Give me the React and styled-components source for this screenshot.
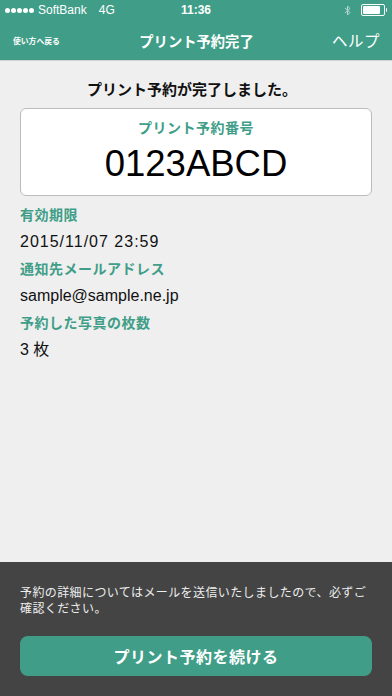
import React from 'react';
import styled, { createGlobalStyle } from 'styled-components';

const GREEN = '#409e88';

const Global = createGlobalStyle`
  html, body { margin: 0; padding: 0; }
  body {
    font-family: "Noto Sans CJK JP", "Liberation Sans", sans-serif;
    background: #efefef;
  }
  #root { height: 696px; }
`;

const Screen = styled.div`
  width: 392px;
  height: 696px;
  display: flex;
  flex-direction: column;
  background: #efefef;
  overflow: hidden;
`;

const Top = styled.div`
  background: ${GREEN};
  color: #fff;
  border-bottom: 1px solid #d2d2d2;
`;

const StatusBar = styled.div`
  height: 20px;
  display: flex;
  align-items: center;
  padding: 0 5px 0 5px;
  font-family: "Liberation Sans", "Noto Sans CJK JP", sans-serif;
  font-size: 12px;
  position: relative;
`;

const Carrier = styled.div`
  display: flex;
  align-items: center;
  gap: 4px;
  flex: 1;
`;

const Dots = styled.span`
  display: flex;
  gap: 1px;
  span {
    width: 5px;
    height: 5px;
    border-radius: 50%;
    background: #fff;
  }
`;

const Clock = styled.div`
  position: absolute;
  left: 0;
  right: 0;
  text-align: center;
  font-weight: 600;
  pointer-events: none;
`;

const Battery = styled.div`
  display: flex;
  align-items: center;
  gap: 1px;
  margin-left: 10px;
  span:first-child {
    width: 20px;
    height: 8px;
    border: 1px solid #fff;
    border-radius: 2px;
    padding: 1px;
    box-sizing: content-box;
  }
  span:first-child::after {
    content: '';
    display: block;
    width: 17px;
    height: 8px;
    background: #fff;
    border-radius: 1px;
  }
  span:last-child {
    width: 1.5px;
    height: 4px;
    background: #fff;
    border-radius: 0 1px 1px 0;
  }
`;

const NavBar = styled.div`
  height: 40px;
  display: grid;
  grid-template-columns: 1fr auto 1fr;
  align-items: center;
  padding: 0 12px 0 13px;
`;

const Back = styled.div`
  font-size: 7.8px;
  font-weight: bold;
`;

const Title = styled.div`
  font-size: 14.3px;
  font-weight: bold;
`;

const Help = styled.div`
  justify-self: end;
  font-size: 15.5px;
  letter-spacing: 0.5px;
`;

const Body = styled.div`
  flex: 1;
  padding: 15px 20px 0;
`;

const Heading = styled.div`
  text-align: center;
  font-size: 15px;
  font-weight: bold;
  color: #111;
  line-height: 26px;
  padding-right: 8px;
`;

const Card = styled.div`
  margin-top: 6px;
  height: 86px;
  background: #fff;
  border: 1px solid #bcbcbc;
  border-radius: 6px;
  display: flex;
  flex-direction: column;
  align-items: center;
`;

const CardLabel = styled.div`
  margin-top: 8px;
  font-size: 14px;
  font-weight: bold;
  color: ${GREEN};
  letter-spacing: 0.5px;
`;

const Code = styled.div`
  font-family: "Liberation Sans", Arial, sans-serif;
  font-size: 36.5px;
  color: #000;
  line-height: 40px;
  margin-top: 7px;
`;

const List = styled.div`
  margin-top: 5px;
`;

const Label = styled.div`
  height: 27px;
  line-height: 27px;
  font-size: 14px;
  font-weight: bold;
  color: ${GREEN};
  letter-spacing: 0.5px;
`;

const Value = styled.div`
  height: 27px;
  line-height: 27px;
  font-family: "Liberation Sans", "Noto Sans CJK JP", sans-serif;
  font-size: 16px;
  letter-spacing: ${(p) => (p.$wide ? '1px' : '0')};
  color: #111;
`;

const Footer = styled.div`
  background: #444;
  height: 134px;
  padding: 22px 20px 0;
  box-sizing: border-box;
`;

const Note = styled.div`
  font-size: 12px;
  color: #eee;
  line-height: 16px;
  letter-spacing: 0.4px;
`;

const Button = styled.button`
  margin-top: 20px;
  width: 100%;
  height: 40px;
  border: none;
  border-radius: 8px;
  background: ${GREEN};
  color: #fff;
  font-family: inherit;
  font-size: 16px;
  font-weight: bold;
  letter-spacing: 0.5px;
`;

const Bluetooth = () => (
  <svg width="7" height="11" viewBox="0 0 7 11" fill="none" stroke="#fff" strokeWidth="1" opacity="0.6">
    <path d="M1 3l5 4.5L3.5 10V1L6 3.5 1 8" />
  </svg>
);

const rows = [
  ['有効期限', '2015/11/07 23:59', true],
  ['通知先メールアドレス', 'sample@sample.ne.jp', false],
  ['予約した写真の枚数', '3 枚', false],
];

export default function App() {
  return (
    <Screen>
      <Global />
      <Top>
        <StatusBar>
          <Carrier>
            <Dots>
              <span /><span /><span /><span /><span />
            </Dots>
            <span>SoftBank</span>
            <span style={{ marginLeft: 8 }}>4G</span>
          </Carrier>
          <Clock>11:36</Clock>
          <Bluetooth />
          <Battery>
            <span />
            <span />
          </Battery>
        </StatusBar>
        <NavBar>
          <Back>使い方へ戻る</Back>
          <Title>プリント予約完了</Title>
          <Help>ヘルプ</Help>
        </NavBar>
      </Top>
      <Body>
        <Heading>プリント予約が完了しました。</Heading>
        <Card>
          <CardLabel>プリント予約番号</CardLabel>
          <Code>0123ABCD</Code>
        </Card>
        <List>
          {rows.map(([label, value, wide]) => (
            <React.Fragment key={label}>
              <Label>{label}</Label>
              <Value $wide={wide}>{value}</Value>
            </React.Fragment>
          ))}
        </List>
      </Body>
      <Footer>
        <Note>予約の詳細についてはメールを送信いたしましたので、必ずご確認ください。</Note>
        <Button>プリント予約を続ける</Button>
      </Footer>
    </Screen>
  );
}
